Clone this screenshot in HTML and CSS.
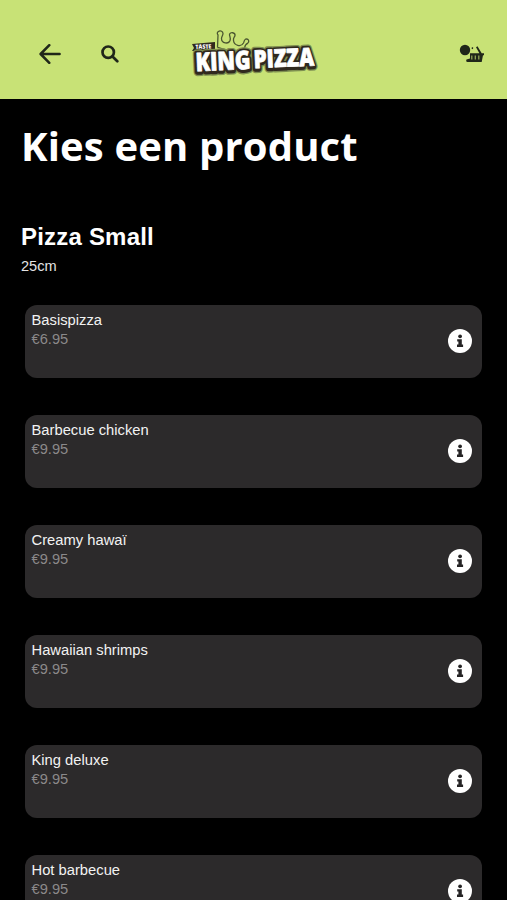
FILE: index.html
```
<!DOCTYPE html>
<html lang="nl">
<head>
<meta charset="utf-8">
<meta name="viewport" content="width=device-width, initial-scale=1">
<title>King Pizza</title>
<link rel="stylesheet" href="styles.css">
</head>
<body>
<svg class="sprite" width="0" height="0">
  <symbol id="info" viewBox="0 0 24 24">
    <circle cx="12" cy="12" r="12" fill="#fff"/>
    <circle cx="12.1" cy="7.3" r="1.9" fill="#252425"/>
    <path d="M9.2 10.3h4.6v5.3h1.3v2.3H9v-2.3h1.4v-3H9.2z" fill="#252425"/>
  </symbol>
</svg>
<header class="topbar">
  <svg class="back" viewBox="0 0 22 20"><path d="M10.3 1.2 1.6 10l8.700 8.800M2 10h18.600"/></svg>
  <svg class="search" viewBox="0 0 18 18"><circle cx="7.200" cy="7.200" r="5.700"/><path d="m11.500 11.500 4.800 4.800"/></svg>
  <svg class="logo" viewBox="0 0 150 65">
    <path class="crown" d="M37.500 27.500 38 15c-3-4 4.500-6 5-1.500 0 2-1.500 3-1.500 5 0 5 7 6 8.500 2 1-3-.5-4-.5-6 .5-3 6-2 5.500 1-.3 1.500-2 2-1.500 5 .5 5 7.500 7 10 2.500 1-2 .5-3 2-3.800 3-1 4.500 2.500 2 4.300-2.500.5-2.500 3-3.500 6M37 27l14 4.500"/>
    <path class="tag" d="m12 24 23-2v8l-23 1 2-3z"/>
    <text class="taste" x="15.500" y="29" textLength="16" lengthAdjust="spacingAndGlyphs" transform="rotate(-2 15 29)">TASTE</text>
    <g class="halo">
      <text x="15.500" y="52" textLength="55.500" lengthAdjust="spacingAndGlyphs" transform="rotate(-2.500 16 51)">KING</text>
      <text class="pizza" x="73.500" y="49" textLength="60.500" lengthAdjust="spacingAndGlyphs" transform="rotate(-2.500 74 49)">PIZZA</text>
    </g>
    <g class="shade">
      <text x="15.500" y="52" textLength="55.500" lengthAdjust="spacingAndGlyphs" transform="rotate(-2.500 16 51)">KING</text>
      <text class="pizza" x="73.500" y="49" textLength="60.500" lengthAdjust="spacingAndGlyphs" transform="rotate(-2.500 74 49)">PIZZA</text>
    </g>
    <g class="face">
      <text x="16" y="51.200" textLength="55" lengthAdjust="spacingAndGlyphs" transform="rotate(-2.500 16 51)">KING</text>
      <text class="pizza" x="74" y="48.200" textLength="60.500" lengthAdjust="spacingAndGlyphs" transform="rotate(-2.500 74 49)">PIZZA</text>
    </g>
  </svg>
  <svg class="basket" viewBox="0 0 26 20">
    <circle cx="6" cy="6" r="5.200"/>
    <path d="M11 9.200h14v2h-1l-1.300 6.700H8.500q-2-.5-1-2.500l3.500-1zM13 3l1.300.8-.5 1.500-1.300-.8zM17 3.200l1.500-1 4.200 7h-2.300z"/>
    <path class="slots" d="M12.800 11.600v4M16.300 11.600v4M19.800 11.600v4"/>
  </svg>
</header>
<main>
  <h1>Kies een product</h1>
  <h2>Pizza Small</h2>
  <p class="size">25cm</p>
  <ul class="products">
    <li><div><h3>Basispizza</h3><p>€6.95</p></div><svg><use href="#info"/></svg></li>
    <li><div><h3>Barbecue chicken</h3><p>€9.95</p></div><svg><use href="#info"/></svg></li>
    <li><div><h3>Creamy hawaï</h3><p>€9.95</p></div><svg><use href="#info"/></svg></li>
    <li><div><h3>Hawaiian shrimps</h3><p>€9.95</p></div><svg><use href="#info"/></svg></li>
    <li><div><h3>King deluxe</h3><p>€9.95</p></div><svg><use href="#info"/></svg></li>
    <li><div><h3>Hot barbecue</h3><p>€9.95</p></div><svg><use href="#info"/></svg></li>
  </ul>
</main>
</body>
</html>
```
FILE: styles.css
```
* { box-sizing: border-box; margin: 0; padding: 0; }
html, body { height: 900px; overflow: hidden; }
body { background: #000; color: #fff; font-family: "Liberation Sans", Arial, sans-serif; }
.sprite { display: block; }
.topbar { display: flex; height: 98.5px; padding: 20px 22px 0 39px; background: #c8e276; }
.topbar svg { flex: none; }
.back { width: 22px; height: 20px; margin-top: 23.5px; fill: none; stroke: #202719; stroke-width: 2.5; stroke-linecap: round; stroke-linejoin: round; }
.search { width: 18px; height: 18px; margin: 24.5px 0 0 40px; fill: none; stroke: #202719; stroke-width: 2.7; stroke-linecap: round; }
.logo { width: 150px; height: 65px; margin-left: 61px; }
.logo text { font-family: "Open Sans", sans-serif; font-weight: 800; font-size: 25.5px; stroke-linejoin: round; }
.logo .pizza { font-size: 25px; }
.logo .taste { font-size: 6px; fill: #fff; }
.crown { fill: none; stroke: #4b5730; stroke-width: 1.3; }
.tag { fill: #30291e; }
.halo { fill: #7f8f50; stroke: #7f8f50; stroke-width: 8.5; }
.shade { fill: #30291e; stroke: #30291e; stroke-width: 5.8; }
.face { fill: #fff; stroke: #fff; stroke-width: .8; }
.basket { width: 26px; height: 20px; margin: 24px 0 0 auto; fill: #202719; }
.slots { stroke: #9aaf5c; stroke-width: 1.2; }
main { padding: 0 25px 0 21px; }
h1 { margin-top: 19px; font: 700 40px/56px "Open Sans", sans-serif; letter-spacing: .15px; white-space: nowrap; }
h2 { margin-top: 48.5px; font-size: 24px; line-height: 30px; letter-spacing: .2px; }
.size { margin-top: 5px; font-size: 14.6px; line-height: 18px; color: #e4e4e4; }
.products { display: grid; gap: 36.7px; margin: 30px 0 0 4px; list-style: none; }
.products li { display: flex; justify-content: space-between; align-items: center; height: 73.3px; padding: 0 10px 1px 6.5px; border-radius: 12px; background: #2c2a2b; }
.products div { align-self: flex-start; padding-top: 5px; }
h3 { font-size: 14.75px; font-weight: 400; line-height: 20px; color: #f2f2f2; }
.products p { font-size: 14.7px; line-height: 19px; color: #8b898a; }
.products svg { width: 24px; height: 24px; }
```
